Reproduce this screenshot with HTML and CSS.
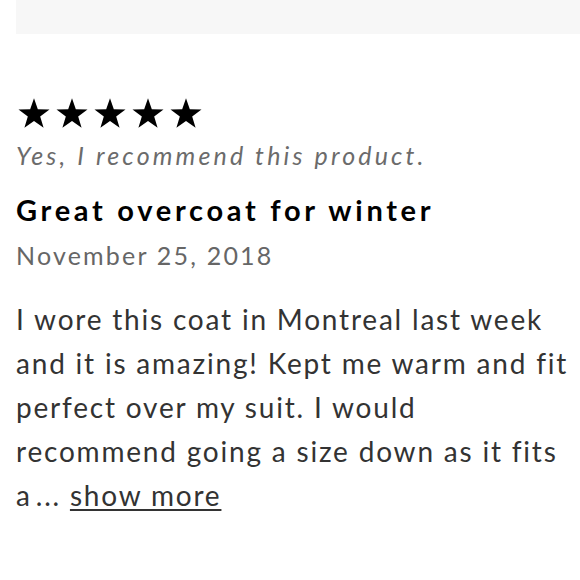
FILE: index.html
```html
<!DOCTYPE html>
<html lang="en">
<head>
<meta charset="utf-8">
<title>Review</title>
<link rel="stylesheet" href="styles.css">
</head>
<body>
<div class="page">
  <div class="topbar"></div>
  <article class="review">
    <div class="stars" aria-label="5 out of 5 stars">
      <svg class="star" viewBox="0 0 32 30"><path d="M16 .3 19.82 11.34 31.5 11.56 22.18 18.61 25.58 29.79 16 23.1 6.42 29.79 9.82 18.61 .5 11.56 12.18 11.34z"/></svg>
      <svg class="star" viewBox="0 0 32 30"><path d="M16 .3 19.82 11.34 31.5 11.56 22.18 18.61 25.58 29.79 16 23.1 6.42 29.79 9.82 18.61 .5 11.56 12.18 11.34z"/></svg>
      <svg class="star" viewBox="0 0 32 30"><path d="M16 .3 19.82 11.34 31.5 11.56 22.18 18.61 25.58 29.79 16 23.1 6.42 29.79 9.82 18.61 .5 11.56 12.18 11.34z"/></svg>
      <svg class="star" viewBox="0 0 32 30"><path d="M16 .3 19.82 11.34 31.5 11.56 22.18 18.61 25.58 29.79 16 23.1 6.42 29.79 9.82 18.61 .5 11.56 12.18 11.34z"/></svg>
      <svg class="star" viewBox="0 0 32 30"><path d="M16 .3 19.82 11.34 31.5 11.56 22.18 18.61 25.58 29.79 16 23.1 6.42 29.79 9.82 18.61 .5 11.56 12.18 11.34z"/></svg>
    </div>
    <p class="recommend">Yes, I recommend this product.</p>
    <h2 class="title">Great overcoat for winter</h2>
    <p class="date">November 25, 2018</p>
    <p class="body">I wore this coat in Montreal last week and it is amazing! Kept me warm and fit perfect over my suit. I would recommend going a size down as it fits a<span class="ellipsis">...</span> <a class="more" href="#">show more</a></p>
  </article>
</div>
</body>
</html>
```
FILE: styles.css
```css
html, body {
  margin: 0;
  padding: 0;
  background: #fff;
}
body {
  font-family: Lato, "Open Sans", sans-serif;
  color: #333;
}
.page {
  padding-left: 16px;
}
.topbar {
  height: 34px;
  background: #f7f7f7;
}
.review {
  padding-top: 64px;
}
.stars {
  display: flex;
  gap: 6px;
  height: 30px;
  margin-left: 2px;
}
.star {
  width: 32px;
  height: 30px;
  fill: #000;
}
.recommend {
  margin: 12px 0 0;
  font-style: italic;
  font-size: 25px;
  line-height: 30px;
  letter-spacing: 3.15px;
  color: #6b6b6b;
}
.title {
  margin: 22px 0 0;
  font-size: 29px;
  line-height: 35px;
  font-weight: 700;
  letter-spacing: 3.7px;
  color: #000;
}
.date {
  margin: 13px 0 0;
  font-size: 25px;
  line-height: 30px;
  letter-spacing: 2.2px;
  color: #666;
}
.body {
  margin: 27px 0 0;
  font-size: 28px;
  line-height: 44px;
  letter-spacing: 1.8px;
  color: #333;
}
.ellipsis {
  margin-left: 4px;
}
.more {
  color: #333;
  text-decoration: underline;
  text-decoration-thickness: 2px;
  text-underline-offset: 3px;
}
```
